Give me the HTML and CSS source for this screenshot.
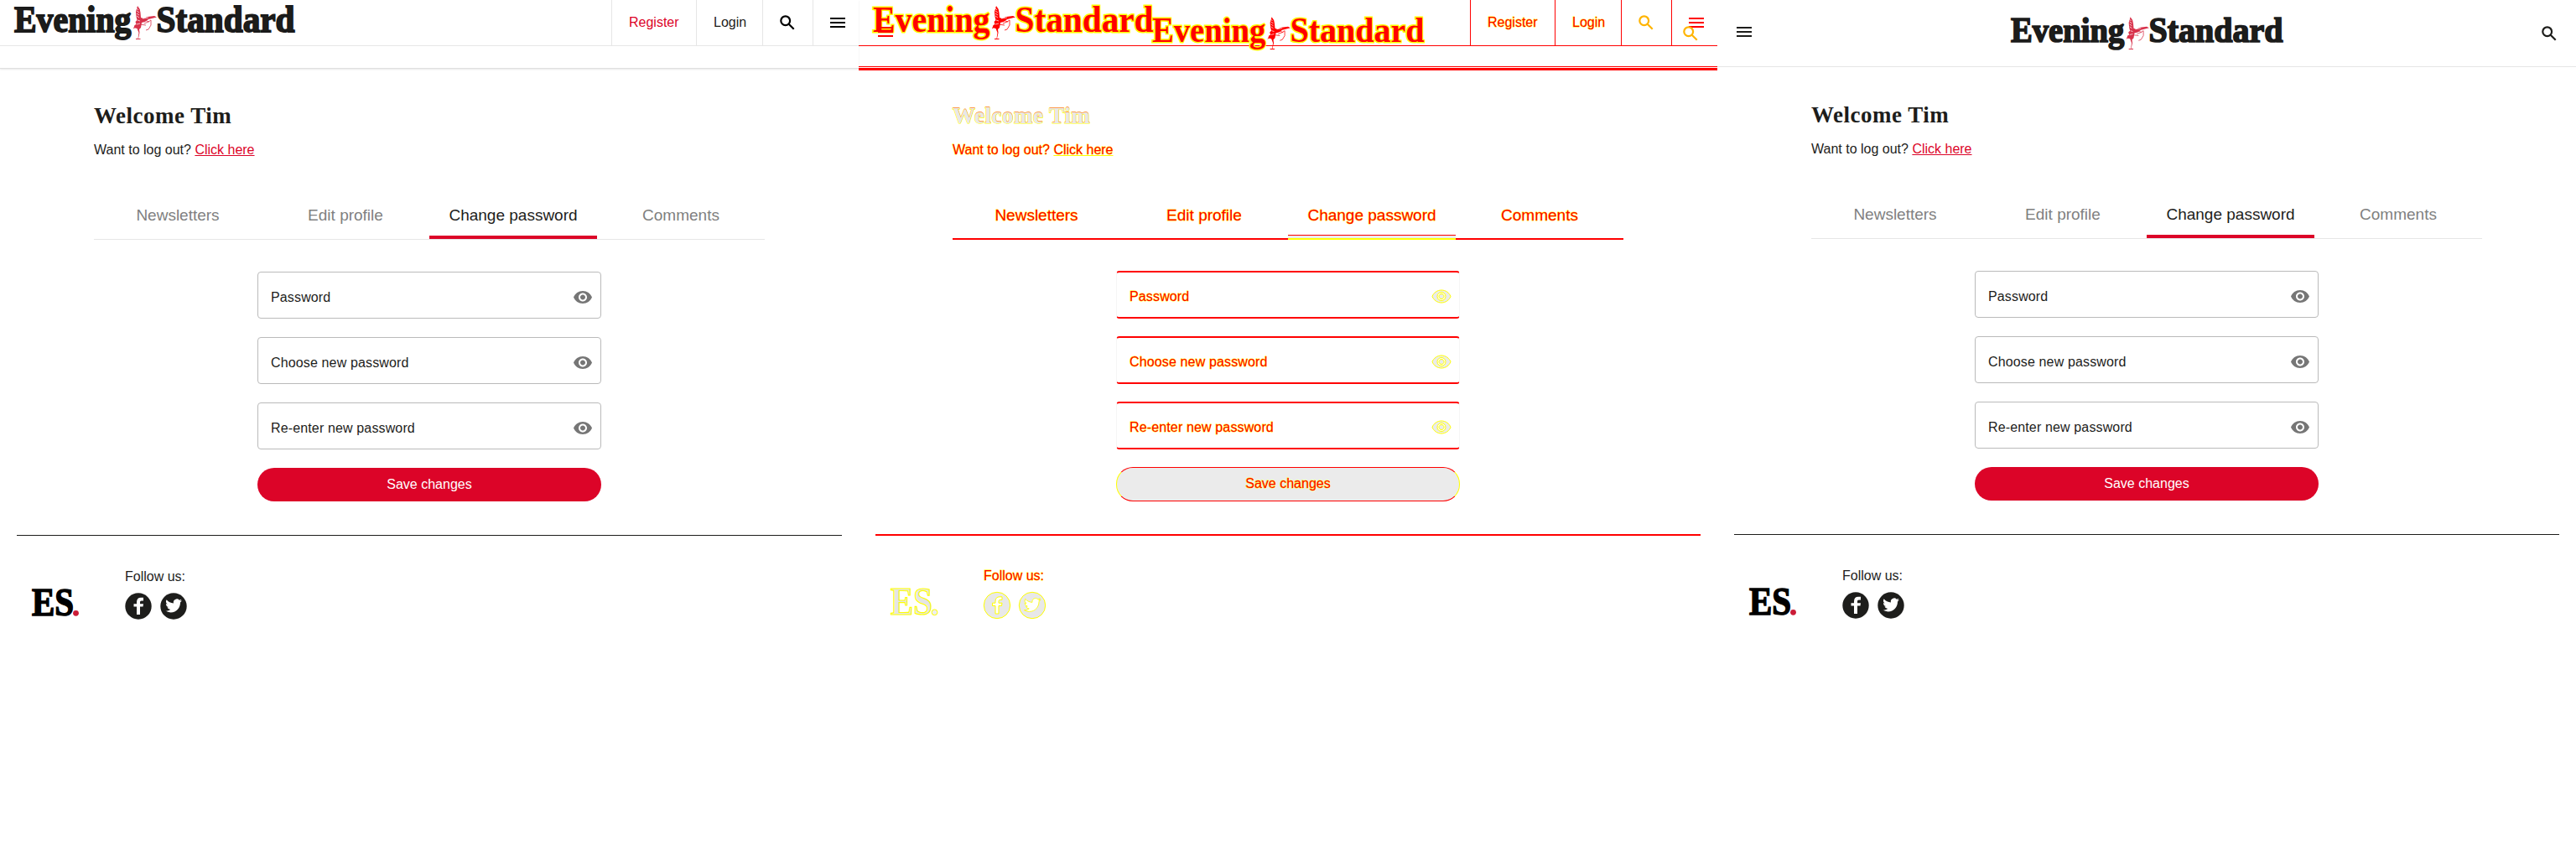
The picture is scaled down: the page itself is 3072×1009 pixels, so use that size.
FILE: index.html
```
<!DOCTYPE html>
<html lang="en">
<head>
<meta charset="utf-8">
<title>Evening Standard – account comparison</title>
<link rel="stylesheet" href="styles.css">
</head>
<body>
<svg class="defs" aria-hidden="true">
<symbol id="logo" viewBox="0 0 336 44" overflow="visible">
<g class="logo-type"><text x="1" y="30.500" textLength="139.500" lengthAdjust="spacingAndGlyphs">Evening</text><text x="170.500" y="30.500" textLength="165" lengthAdjust="spacingAndGlyphs">Standard</text></g>
<path class="logo-eros" d="M148 0q3 3 3.500 8l.5 6 3 1 5-2 8-1 3 1.500-6 1.500-4 1-4 3-4 1-1 6-2 2 .5 4-1.500 7h2.500v1H146v-1h2.500l1-7-2-5-4-1 1-3 2-1-1-3 2-2-1-4-.5-6z"/>
<path class="logo-eros-line" d="M154 16l5 2 3 1m-6 2l5-2 3-2v6l-3 5-3 1M143 27l7-5 8 1"/>
<path class="logo-gap" d="M147 3l2 2m-2 1l3 2m-3 1l3 2m-3 1l3 2m-2 3l3 1m-4 4l4-1m3-6l7-1"/>
</symbol>
<symbol id="search" viewBox="0 0 18 18"><circle cx="6.7" cy="6.7" r="5.4"/><path d="M10.500 10.500l6.200 6.200"/></symbol>
<symbol id="menu" viewBox="0 0 18 12"><path d="M0 0h18v2H0zm0 5h18v2H0zm0 5h18v2H0z"/></symbol>
<symbol id="eye" viewBox="1 4.5 22 15" overflow="visible"><path d="M12 4.500C7 4.500 2.730 7.610 1 12c1.730 4.390 6 7.500 11 7.500s9.270-3.110 11-7.500c-1.730-4.390-6-7.500-11-7.500zM12 17c-2.760 0-5-2.240-5-5s2.240-5 5-5 5 2.240 5 5-2.240 5-5 5zm0-8c-1.660 0-3 1.340-3 3s1.340 3 3 3 3-1.340 3-3-1.340-3-3-3z"/></symbol>
<symbol id="es" viewBox="0 0 58 36" overflow="visible"><text class="es-type" x="1" y="32" textLength="50" lengthAdjust="spacingAndGlyphs">ES</text><circle class="es-dot" cx="53.500" cy="29.300" r="3.400"/></symbol>
<symbol id="fb" viewBox="0 0 32 32" overflow="visible"><circle class="disc" cx="16" cy="16" r="15.700"/><path class="glyph" d="M14 26V16.500h-3.500v-3.300H14V11c0-3.500 2-5.200 5-5.200h3v3.600h-2c-1.600 0-2 .8-2 2v1.800h4l-.5 3.300H18V26z"/></symbol>
<symbol id="tw" viewBox="0 0 32 32" overflow="visible"><circle class="disc" cx="16" cy="16" r="15.700"/><path class="glyph" transform="translate(6.300 5.600) scale(.82)" d="M23.950 4.570a10 10 0 0 1-2.820.77 4.960 4.960 0 0 0 2.160-2.720c-.95.550-2 .95-3.130 1.180a4.920 4.920 0 0 0-8.380 4.480C7.690 8.100 4.070 6.130 1.640 3.160a4.920 4.920 0 0 0 1.520 6.570 4.900 4.900 0 0 1-2.230-.61v.06a4.920 4.920 0 0 0 3.950 4.830 5 5 0 0 1-2.210.08 4.940 4.940 0 0 0 4.600 3.420A9.870 9.870 0 0 1 0 19.540a13.990 13.990 0 0 0 7.550 2.210c9.050 0 14-7.500 14-13.980l-.02-.64a9.940 9.940 0 0 0 2.420-2.560z"/></symbol>
</svg>
<main class="panels">
<section class="panel desktop">
<header class="header">
<div class="topbar"><svg class="logo"><use href="#logo"/></svg><nav class="nav"><a class="register">Register</a><a class="login">Login</a><a class="cell find"><svg class="search"><use href="#search"/></svg></a><a class="cell more"><svg class="menu"><use href="#menu"/></svg></a></nav></div>
</header>
<div class="content">
<h1>Welcome Tim</h1>
<p class="logout">Want to log out? <a>Click here</a></p>
<nav class="tabs"><a>Newsletters</a><a>Edit profile</a><a class="active">Change password</a><a>Comments</a></nav>
<form class="form"><div class="field"><span>Password</span><svg class="eye"><use href="#eye"/></svg></div><div class="field"><span>Choose new password</span><svg class="eye"><use href="#eye"/></svg></div><div class="field"><span>Re-enter new password</span><svg class="eye"><use href="#eye"/></svg></div><div class="save">Save changes</div></form>
</div>
<footer class="footer"><svg class="es"><use href="#es"/></svg><div class="follow"><p>Follow us:</p><div class="social"><svg><use href="#fb"/></svg><svg><use href="#tw"/></svg></div></div></footer>
</section>
<section class="panel diff">
<header class="header">
<div class="topbar"><svg class="logo"><use href="#logo"/></svg><nav class="nav"><a class="register">Register</a><a class="login">Login</a><a class="cell find"><svg class="search"><use href="#search"/></svg></a><a class="cell more"><svg class="menu"><use href="#menu"/></svg></a></nav></div>
<div class="overlay"><svg class="menu"><use href="#menu"/></svg><svg class="logo"><use href="#logo"/></svg><svg class="search"><use href="#search"/></svg></div>
</header>
<div class="content">
<h1>Welcome Tim</h1>
<p class="logout">Want to log out? <a>Click here</a></p>
<nav class="tabs"><a>Newsletters</a><a>Edit profile</a><a class="active">Change password</a><a>Comments</a></nav>
<form class="form"><div class="field"><span>Password</span><svg class="eye"><use href="#eye"/></svg></div><div class="field"><span>Choose new password</span><svg class="eye"><use href="#eye"/></svg></div><div class="field"><span>Re-enter new password</span><svg class="eye"><use href="#eye"/></svg></div><div class="save">Save changes</div></form>
</div>
<footer class="footer"><svg class="es"><use href="#es"/></svg><div class="follow"><p>Follow us:</p><div class="social"><svg><use href="#fb"/></svg><svg><use href="#tw"/></svg></div></div></footer>
</section>
<section class="panel compact">
<header class="header"><svg class="menu"><use href="#menu"/></svg><svg class="logo"><use href="#logo"/></svg><svg class="search"><use href="#search"/></svg></header>
<div class="content">
<h1>Welcome Tim</h1>
<p class="logout">Want to log out? <a>Click here</a></p>
<nav class="tabs"><a>Newsletters</a><a>Edit profile</a><a class="active">Change password</a><a>Comments</a></nav>
<form class="form"><div class="field"><span>Password</span><svg class="eye"><use href="#eye"/></svg></div><div class="field"><span>Choose new password</span><svg class="eye"><use href="#eye"/></svg></div><div class="field"><span>Re-enter new password</span><svg class="eye"><use href="#eye"/></svg></div><div class="save">Save changes</div></form>
</div>
<footer class="footer"><svg class="es"><use href="#es"/></svg><div class="follow"><p>Follow us:</p><div class="social"><svg><use href="#fb"/></svg><svg><use href="#tw"/></svg></div></div></footer>
</section>
</main>
</body>
</html>
```
FILE: styles.css
```
* { box-sizing: border-box; }
body { margin: 0; background: #fff; font: 16px/20px "Liberation Sans", Arial, sans-serif; color: #1d1d1b; }
svg { display: block; flex: none; }
h1, p { margin: 0; }
.defs { position: absolute; width: 0; height: 0; }
.panels { display: grid; grid-template-columns: repeat(3, 1024px); height: 1009px; overflow: hidden; }
.panel {
  --ink: #1d1d1b; --accent: #dc0428; --muted: #808080; --rule: #e6e6e6; --field: #bababa;
  --fill: #dc0428; --on-fill: #fff; --footrule: #1d1d1b; --logo-red: #d8324b;
  --eye: #767676; --es: #000; --disc: #1d1d1b; --glyph: #fff; --icon: #000;
  --logo-edge: #1a1a1a; --logo-edge-width: 1.8px; --logo-order: normal;
  --es-edge: #000; --es-edge-width: 1.6px; --dot: #cb1c37; --shape-edge: none;
}
.header { position: relative; height: 82px; border-bottom: 1px solid #dfdfdf; box-shadow: 0 1px 2px #e8e8e8; }
.topbar { height: 55px; display: flex; justify-content: space-between; border-bottom: 1px solid var(--rule); }
.logo { width: 336px; height: 44px; overflow: visible; }
.topbar .logo { margin: 7px 0 0 16px; }
.logo-type { font: bold 44px "Liberation Serif", serif; fill: var(--ink); stroke: var(--logo-edge); stroke-width: var(--logo-edge-width); paint-order: var(--logo-order); }
.logo-eros { fill: var(--logo-red); }
.logo-eros-line { fill: none; stroke: var(--logo-red); stroke-width: .8px; }
.logo-gap { fill: none; stroke: #fff; stroke-width: .7px; }
.nav { display: flex; }
.nav a { height: 54px; border-left: 1px solid var(--rule); padding-top: 17px; color: var(--ink); }
.nav .register { width: 101px; padding-left: 20px; color: var(--accent); }
.nav .login { width: 79px; padding-left: 20px; }
.find { width: 60px; padding-left: 20px; }
.more { width: 55px; padding-left: 20px; }
.nav .find { padding-top: 18px; padding-left: 20px; }
.nav .more { padding-top: 21px; }
.search { width: 18px; height: 18px; fill: none; stroke: var(--icon); stroke-width: 2.2px; }
.menu { width: 18px; height: 12px; fill: var(--icon); }
.content { padding: 41px 112px 0; }
h1 { font: bold 27px/30px "Liberation Serif", serif; letter-spacing: .5px; }
.logout { margin-top: 16px; color: var(--ink); }
.logout a { color: var(--accent); text-decoration: underline; }
.tabs { display: grid; grid-template-columns: repeat(4, 200px); height: 57px; margin-top: 40px; border-bottom: 1px solid var(--rule); }
.tabs a { padding-top: 18px; text-align: center; font-size: 19px; color: var(--muted); }
.tabs .active { color: var(--ink); border-bottom: 4px solid var(--fill); }
.form { width: 410px; margin: 38px 0 0 195px; display: flex; flex-direction: column; gap: 22px; }
.field { height: 56px; padding: 0 10px 0 15px; display: flex; align-items: center; justify-content: space-between; border: 1px solid var(--field); border-radius: 4px; color: var(--ink); }
.field span { padding-top: 5px; letter-spacing: .14px; }
.eye { width: 22px; height: 15px; margin-top: 4px; fill: var(--eye); overflow: visible; }
.save { height: 40px; border-radius: 20px; background: var(--fill); color: var(--on-fill); line-height: 39px; text-align: center; }
.footer { margin: 40px 20px 0; padding: 39px 0 0 17px; border-top: 1px solid var(--footrule); display: flex; }
.es { width: 58px; height: 36px; margin: 24px 54px 0 0; overflow: visible; }
.es-type { font: bold 46px "Liberation Serif", serif; fill: var(--es); stroke: var(--es-edge); stroke-width: var(--es-edge-width); }
.es-dot { fill: var(--dot); stroke: var(--shape-edge); }
.social { display: flex; gap: 10px; margin-top: 9px; }
.social svg { width: 32px; height: 32px; overflow: visible; }
.disc { fill: var(--disc); stroke: var(--shape-edge); }
.glyph { fill: var(--glyph); stroke: var(--shape-edge); }

.compact .header { height: 80px; padding: 0 23px; display: flex; align-items: center; justify-content: space-between; border-color: #e6e6e6; box-shadow: none; }
.compact { --icon: #1d1d1b; }
.compact .logo { width: 326px; height: 43px; margin-top: 4px; }
.compact .menu { margin-top: -3px; }
.compact .content { padding-top: 42px; }

/* Changed pixels are red, antialiased edges yellow, unchanged areas grey. */
.diff {
  --ink: #f00; --accent: #f00; --muted: #f00; --rule: #f00; --field: #f00; --fill: #ebebeb;
  --on-fill: #f00; --footrule: #f00; --logo-red: #f00; --eye: #ebebeb; --es: #e5e5e5;
  --disc: #e8e8e8; --glyph: #fff; --icon: #f00;
  --logo-edge: #ff0; --logo-edge-width: 3px; --logo-order: stroke;
  --es-edge: #ff0; --es-edge-width: 1.2px; --dot: #eee; --shape-edge: #ff0;
}
.diff .header { height: 84px; border-bottom: 3px solid #f00; box-shadow: none; background: linear-gradient(#f00, #f00) 0 79px / 100% 1px no-repeat; }
.diff .content { padding-top: 39px; }
.diff h1 { color: #e8e8e8; -webkit-text-stroke: 1.2px #ff0; paint-order: stroke fill; text-shadow: 0 -1px #ff9a4d; }
.diff .nav a, .diff .logout, .diff .tabs a, .diff .field span, .diff .save, .diff .follow p { -webkit-text-stroke: .8px #ff0; paint-order: stroke fill; }
.diff .follow p { color: #f00; }
.diff .tabs { border-bottom-width: 2px; }
.diff .tabs .active { height: 57px; border-bottom: 2px solid #ff0; box-shadow: inset 0 -3px #ebebeb, inset 0 -4px #f00; }
.diff .form { margin-top: 37px; gap: 21px; }
.diff .field { height: 57px; border-width: 2px 1px; border-color: #f00 #f5f5f5; padding-bottom: 1px; }
.diff .eye { stroke: #ff0; stroke-width: 1px; }
.diff .save { height: 41px; border: 1px solid #ff0; border-color: #f00 #ff0; line-height: 38px; }
.diff .footer { border-top-width: 2px; margin-top: 39px; padding-top: 38px; }
.overlay { position: absolute; inset: 0; display: flex; justify-content: space-between; padding: 0 23px; }
.overlay .menu { margin-top: 32px; }
.overlay .logo { width: 326px; height: 43px; margin-top: 20px; }
.overlay .search, .diff .search { stroke: #ffb400; }
.overlay .search { margin-top: 31px; }
```
